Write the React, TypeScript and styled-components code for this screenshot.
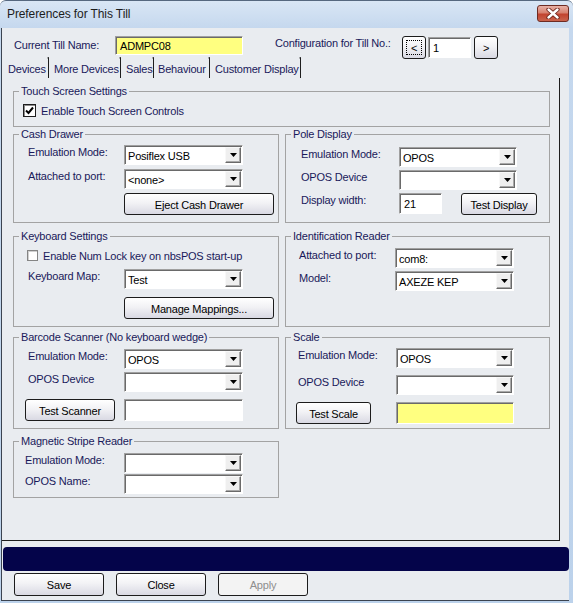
import * as React from 'react';
import styled, { createGlobalStyle } from 'styled-components';

const INK = '#19195a';
const FACE = '#e9ecf0';

const GlobalStyle = createGlobalStyle`
  html, body {
    margin: 0;
    padding: 0;
    background: #fff;
  }

  body {
    font-family: 'Liberation Sans', Arial, sans-serif;
    font-size: 11px;
    letter-spacing: -0.2px;
  }

  * {
    box-sizing: border-box;
  }
`;

const Window = styled.div`
  width: 573px;
  height: 603px;
  display: flex;
  flex-direction: column;
  padding: 0 4px 2px 1px;
  border-top: 1px solid #56687f;
  border-radius: 6px 6px 0 0;
  background: linear-gradient(#d9e6f5, #c5d8ee 27px, #bcd2eb);
`;

const TitleBar = {
  Container: styled.div`
    height: 27px;
    flex-shrink: 0;
    display: flex;
    align-items: flex-start;
  `,

  Caption: styled.div`
    margin: 6px 0 0 6px;
    font-size: 12px;
    line-height: 14px;
    letter-spacing: -0.1px;
    color: #1c1c1c;
  `,

  Close: styled.div`
    width: 32px;
    height: 17px;
    margin: 4px 0 0 auto;
    display: flex;
    align-items: center;
    justify-content: center;
    border: 1px solid #6e2b22;
    border-radius: 3px;
    background: linear-gradient(#e8b1a6, #d7816f 45%, #c2432f 55%, #c9634c);
  `,
};

const Client = styled.div`
  flex: 1;
  display: flex;
  flex-direction: column;
  background: ${FACE};
  border-left: 1px solid #3b4350;
  border-bottom: 1px solid #3b4350;
`;

const TopBar = styled.div`
  height: 30px;
  flex-shrink: 0;
  display: flex;
  align-items: flex-start;
`;

const TopLabel = styled.div<{ $w: number; $ml: number; $mt: number }>`
  width: ${(p) => p.$w}px;
  margin: ${(p) => p.$mt}px 0 0 ${(p) => p.$ml}px;
  line-height: 13px;
  color: ${INK};
  white-space: nowrap;
`;

const TextBox = styled.div<{ $w: number; $h: number; $mt?: number; $ml?: number; $bg?: string }>`
  width: ${(p) => p.$w}px;
  height: ${(p) => p.$h}px;
  margin: ${(p) => p.$mt ?? 0}px 0 0 ${(p) => p.$ml ?? 0}px;
  flex-shrink: 0;
  padding: 1px 0 0 4px;
  display: flex;
  align-items: center;
  color: #000;
  background: ${(p) => p.$bg ?? '#fff'};
  border: 1px solid;
  border-color: #a0a0a0 #fff #fff #a0a0a0;
  box-shadow: inset 1px 1px 0 #6a6a6a;
`;

const Button = styled.div<{ $w: number; $h: number; $mt?: number; $ml?: number; $focus?: boolean; $off?: boolean }>`
  width: ${(p) => p.$w}px;
  height: ${(p) => p.$h}px;
  margin: ${(p) => p.$mt ?? 0}px 0 0 ${(p) => p.$ml ?? 0}px;
  flex-shrink: 0;
  display: flex;
  align-items: center;
  justify-content: center;
  padding-top: 1px;
  color: ${(p) => (p.$off ? '#8e8e8e' : '#000')};
  border: 1px solid #1c1c1c;
  border-radius: 3px;
  background: ${(p) => (p.$off ? '#f3f3f3' : 'linear-gradient(#ffffff, #f2f2f5 45%, #d9d9e3)')};
  outline: ${(p) => (p.$focus ? '1px dotted #000' : 'none')};
  outline-offset: -5px;
`;

const Tabs = {
  Strip: styled.div`
    height: 20px;
    flex-shrink: 0;
    display: flex;
  `,

  Tab: styled.div<{ $w: number; $pl: number }>`
    position: relative;
    width: ${(p) => p.$w}px;
    padding-left: ${(p) => p.$pl}px;
    line-height: 22px;
    color: ${INK};
    white-space: nowrap;
    border-right: 1px solid #1e1e1e;

    &::after {
      content: '';
      position: absolute;
      top: -1px;
      right: -1px;
      width: 2px;
      height: 2px;
      border-top: 1px solid #1e1e1e;
      border-top-left-radius: 2px;
    }
  `,

  Page: styled.div`
    width: 558px;
    height: 463px;
    flex-shrink: 0;
    display: flex;
    flex-direction: column;
    padding: 0 9px 0 11px;
    border-right: 1px solid #1e1e1e;
    border-bottom: 1px solid #1e1e1e;
  `,
};

const Row = styled.div<{ $mt: number }>`
  margin-top: ${(p) => p.$mt}px;
  display: grid;
  grid-template-columns: 266px 265px;
  column-gap: 6px;
`;

const Group = {
  Box: styled.div<{ $h: number; $wide?: boolean }>`
    height: ${(p) => p.$h}px;
    grid-column: ${(p) => (p.$wide ? '1 / 3' : 'auto')};
    border: 1px solid #a3a3a3;
  `,

  Legend: styled.div`
    width: fit-content;
    height: 13px;
    margin: -7px 0 0 5px;
    padding: 0 2px;
    line-height: 13px;
    color: ${INK};
    background: ${FACE};
    white-space: nowrap;
  `,

  Body: styled.div<{ $pl: number }>`
    padding-left: ${(p) => p.$pl}px;
  `,
};

const Field = styled.div<{ $mt: number }>`
  margin-top: ${(p) => p.$mt}px;
  display: flex;
  align-items: flex-start;
`;

const FieldLabel = styled.div<{ $w: number }>`
  width: ${(p) => p.$w}px;
  flex-shrink: 0;
  padding-top: 1px;
  line-height: 13px;
  color: ${INK};
  white-space: nowrap;
`;

const Combo = {
  Box: styled.div<{ $w: number }>`
    width: ${(p) => p.$w}px;
    height: 20px;
    flex-shrink: 0;
    display: flex;
    padding: 1px;
    background: #fff;
    border: 1px solid;
    border-color: #a0a0a0 #fff #fff #a0a0a0;
    box-shadow: inset 1px 1px 0 #6a6a6a;
  `,

  Text: styled.div`
    flex: 1;
    padding: 2px 0 0 2px;
    line-height: 14px;
    color: #000;
    white-space: nowrap;
    overflow: hidden;
  `,

  Drop: styled.div`
    width: 16px;
    height: 16px;
    display: flex;
    align-items: center;
    justify-content: center;
    background: #efefef;
    border: 1px solid;
    border-color: #f8f8f8 #6a6a6a #6a6a6a #f8f8f8;
    box-shadow: inset -1px -1px 0 #a8a8a8;
  `,
};

const CheckRow = styled.div<{ $mt: number; $ml: number; $gap: number }>`
  height: 13px;
  margin: ${(p) => p.$mt}px 0 0 ${(p) => p.$ml}px;
  display: flex;
  align-items: center;
  gap: ${(p) => p.$gap}px;
  color: ${INK};
  white-space: nowrap;
`;

const CheckBox = styled.span<{ $size: number; $dark?: boolean }>`
  width: ${(p) => p.$size}px;
  height: ${(p) => p.$size}px;
  flex-shrink: 0;
  display: inline-flex;
  align-items: center;
  justify-content: center;
  background: #fff;
  border: 1px solid ${(p) => (p.$dark ? '#1e1e1e' : '#858585')};
  box-shadow: inset 1px 1px 0 ${(p) => (p.$dark ? '#8c8c8c' : '#d0d0d0')};
`;

const StatusBar = styled.div`
  width: 566px;
  height: 24px;
  margin: 6px 0 0 1px;
  flex-shrink: 0;
  border-radius: 4px;
  background: #04044a;
`;

const Footer = styled.div`
  margin: 2px 0 0 12px;
  display: flex;
  gap: 12px;
`;

const DropArrow = () => (
  <svg width="7" height="4" viewBox="0 0 7 4">
    <polygon points="0,0 7,0 3.5,4" fill="#000" />
  </svg>
);

const CheckMark = () => (
  <svg width="9" height="9" viewBox="0 0 9 9">
    <polyline points="1,4.5 3.5,7 8,1.5" fill="none" stroke="#000" strokeWidth="2" />
  </svg>
);

const CloseGlyph = () => (
  <svg width="14" height="11" viewBox="0 0 14 11">
    <path d="M2.5 1.5 L11.5 9.5 M11.5 1.5 L2.5 9.5" stroke="#6b2219" strokeWidth="4.2" strokeLinecap="round" />
    <path d="M2.5 1.5 L11.5 9.5 M11.5 1.5 L2.5 9.5" stroke="#fff" strokeWidth="2.4" strokeLinecap="round" />
  </svg>
);

const ComboBox = ({ w, value = '' }: { w: number; value?: string }) => (
  <Combo.Box $w={w}>
    <Combo.Text>{value}</Combo.Text>
    <Combo.Drop>
      <DropArrow />
    </Combo.Drop>
  </Combo.Box>
);

type GroupProps = { title: string; h: number; pl: number; wide?: boolean; children: React.ReactNode };

const GroupBox = ({ title, h, pl, wide, children }: GroupProps) => (
  <Group.Box $h={h} $wide={wide}>
    <Group.Legend>{title}</Group.Legend>
    <Group.Body $pl={pl}>{children}</Group.Body>
  </Group.Box>
);

const tabs = [
  { label: 'Devices', w: 47, pl: 6 },
  { label: 'More Devices', w: 72, pl: 5 },
  { label: 'Sales', w: 33, pl: 5 },
  { label: 'Behaviour', w: 56, pl: 4 },
  { label: 'Customer Display', w: 91, pl: 5 },
];

const App = () => (
  <>
    <GlobalStyle />
    <Window>
      <TitleBar.Container>
        <TitleBar.Caption>Preferences for This Till</TitleBar.Caption>
        <TitleBar.Close>
          <CloseGlyph />
        </TitleBar.Close>
      </TitleBar.Container>

      <Client>
        <TopBar>
          <TopLabel $w={101} $ml={12} $mt={11}>Current Till Name:</TopLabel>
          <TextBox $w={128} $h={19} $mt={8} $bg="#ffff80">ADMPC08</TextBox>
          <TopLabel $w={127} $ml={32} $mt={9}>Configuration for Till No.:</TopLabel>
          <Button $w={24} $h={23} $mt={8} $focus>&lt;</Button>
          <TextBox $w={43} $h={21} $mt={9} $ml={2}>1</TextBox>
          <Button $w={24} $h={23} $mt={8} $ml={3}>&gt;</Button>
        </TopBar>

        <Tabs.Strip>
          {tabs.map((t) => (
            <Tabs.Tab key={t.label} $w={t.w} $pl={t.pl}>
              {t.label}
            </Tabs.Tab>
          ))}
        </Tabs.Strip>

        <Tabs.Page>
          <Row $mt={13}>
            <GroupBox title="Touch Screen Settings" h={36} pl={9} wide>
              <CheckRow $mt={6} $ml={0} $gap={5}>
                <CheckBox $size={13} $dark>
                  <CheckMark />
                </CheckBox>
                Enable Touch Screen Controls
              </CheckRow>
            </GroupBox>
          </Row>

          <Row $mt={7}>
            <GroupBox title="Cash Drawer" h={89} pl={14}>
              <Field $mt={4}>
                <FieldLabel $w={96}>Emulation Mode:</FieldLabel>
                <ComboBox w={119} value="Posiflex USB" />
              </Field>
              <Field $mt={4}>
                <FieldLabel $w={96}>Attached to port:</FieldLabel>
                <ComboBox w={119} value="<none>" />
              </Field>
              <Field $mt={4}>
                <FieldLabel $w={96} />
                <Button $w={150} $h={22}>Eject Cash Drawer</Button>
              </Field>
            </GroupBox>

            <GroupBox title="Pole Display" h={89} pl={15}>
              <Field $mt={6}>
                <FieldLabel $w={98}>Emulation Mode:</FieldLabel>
                <ComboBox w={118} value="OPOS" />
              </Field>
              <Field $mt={3}>
                <FieldLabel $w={98}>OPOS Device</FieldLabel>
                <ComboBox w={118} />
              </Field>
              <Field $mt={3}>
                <FieldLabel $w={98}>Display width:</FieldLabel>
                <TextBox $w={43} $h={21}>21</TextBox>
                <Button $w={76} $h={22} $ml={19}>Test Display</Button>
              </Field>
            </GroupBox>
          </Row>

          <Row $mt={13}>
            <GroupBox title="Keyboard Settings" h={91} pl={14}>
              <CheckRow $mt={6} $ml={-1} $gap={5}>
                <CheckBox $size={11} />
                Enable Num Lock key on nbsPOS start-up
              </CheckRow>
              <Field $mt={7}>
                <FieldLabel $w={96}>Keyboard Map:</FieldLabel>
                <ComboBox w={119} value="Test" />
              </Field>
              <Field $mt={8}>
                <FieldLabel $w={96} />
                <Button $w={150} $h={22}>Manage Mappings...</Button>
              </Field>
            </GroupBox>

            <GroupBox title="Identification Reader" h={91} pl={13}>
              <Field $mt={5}>
                <FieldLabel $w={96}>Attached to port:</FieldLabel>
                <ComboBox w={119} value="com8:" />
              </Field>
              <Field $mt={3}>
                <FieldLabel $w={96}>Model:</FieldLabel>
                <ComboBox w={119} value="AXEZE KEP" />
              </Field>
            </GroupBox>
          </Row>

          <Row $mt={10}>
            <GroupBox title="Barcode Scanner (No keyboard wedge)" h={92} pl={14}>
              <Field $mt={5}>
                <FieldLabel $w={96}>Emulation Mode:</FieldLabel>
                <ComboBox w={119} value="OPOS" />
              </Field>
              <Field $mt={3}>
                <FieldLabel $w={96}>OPOS Device</FieldLabel>
                <ComboBox w={119} />
              </Field>
              <Field $mt={7}>
                <Button $w={90} $h={22} $ml={-3}>Test Scanner</Button>
                <TextBox $w={119} $h={22} $ml={9} />
              </Field>
            </GroupBox>

            <GroupBox title="Scale" h={92} pl={12}>
              <Field $mt={4}>
                <FieldLabel $w={98}>Emulation Mode:</FieldLabel>
                <ComboBox w={118} value="OPOS" />
              </Field>
              <Field $mt={7}>
                <FieldLabel $w={98}>OPOS Device</FieldLabel>
                <ComboBox w={118} />
              </Field>
              <Field $mt={7}>
                <Button $w={75} $h={22} $ml={-2}>Test Scale</Button>
                <TextBox $w={118} $h={22} $ml={25} $bg="#ffff80" />
              </Field>
            </GroupBox>
          </Row>

          <Row $mt={12}>
            <GroupBox title="Magnetic Stripe Reader" h={57} pl={11}>
              <Field $mt={5}>
                <FieldLabel $w={99}>Emulation Mode:</FieldLabel>
                <ComboBox w={119} />
              </Field>
              <Field $mt={1}>
                <FieldLabel $w={99}>OPOS Name:</FieldLabel>
                <ComboBox w={119} />
              </Field>
            </GroupBox>
          </Row>
        </Tabs.Page>

        <StatusBar />

        <Footer>
          <Button $w={90} $h={23}>Save</Button>
          <Button $w={90} $h={23}>Close</Button>
          <Button $w={90} $h={23} $off>Apply</Button>
        </Footer>
      </Client>
    </Window>
  </>
);

export default App;
